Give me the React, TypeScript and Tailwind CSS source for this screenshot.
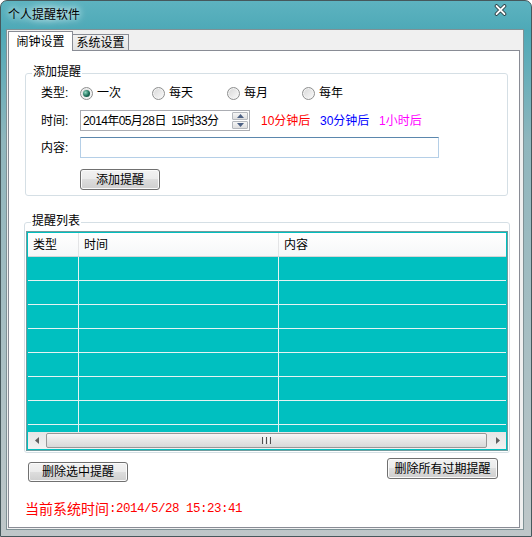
import React from "react";

const FONT = "font-['Liberation_Sans','Noto_Sans_CJK_SC',sans-serif]";

const Radio = ({ checked }: { checked?: boolean }) => (
  <span className="flex h-[13px] w-[13px] shrink-0 items-center justify-center rounded-full border border-[#8e8f8f] bg-[linear-gradient(135deg,#d6d6d6,#fbfbfb)] shadow-[inset_0_0_0_1px_#f4f4f4]">
    {checked && (
      <span className="h-[7px] w-[7px] rounded-full bg-[radial-gradient(circle_at_35%_35%,#8fd8c0,#1d6e59_55%,#0c4536)]" />
    )}
  </span>
);

const Btn = ({ label, className }: { label: string; className: string }) => (
  <button
    className={
      "flex items-center justify-center rounded-[3px] border border-[#707070] bg-[linear-gradient(#f2f2f2_0%,#ebebeb_49%,#dddddd_50%,#cfcfcf_100%)] text-[12px] leading-none text-black shadow-[inset_0_0_0_1px_#fbfbfb] " +
      className
    }
  >
    {label}
  </button>
);

const Tri = ({ dir }: { dir: "up" | "down" | "left" | "right" }) => {
  const d = {
    up: "M0 4 L3.5 0 L7 4 Z",
    down: "M0 0 L7 0 L3.5 4 Z",
    left: "M4 0 L4 7 L0 3.5 Z",
    right: "M0 0 L4 3.5 L0 7 Z",
  }[dir];
  const vertical = dir === "up" || dir === "down";
  return (
    <svg width={vertical ? 7 : 4} height={vertical ? 4 : 7} viewBox={vertical ? "0 0 7 4" : "0 0 4 7"}>
      <path d={d} fill={vertical ? "#4d6184" : "#606060"} />
    </svg>
  );
};

const GroupBox = ({
  title,
  className,
  children,
}: {
  title: string;
  className: string;
  children: React.ReactNode;
}) => (
  <div className={"relative rounded-[3px] border border-[#d5dfe5] " + className}>
    <span className="absolute -top-[9px] left-[6px] bg-white px-[1px] text-[12px] leading-[14px] text-black">
      {title}
    </span>
    {children}
  </div>
);

export default function App() {
  const rows = Array.from({ length: 8 });
  return (
    <div
      className={
        "flex h-[537px] w-[532px] flex-col overflow-hidden rounded-t-[7px] border border-[#46585c] bg-[linear-gradient(180deg,#5db3c0_0px,#4ea9b7_29px,#8fb6bd_140px,#bfc7c9_537px)] " +
        FONT
      }
    >
      {/* title bar */}
      <div className="flex h-[28px] shrink-0 items-start">
        <span className="ml-[7px] mt-[7px] text-[12px] leading-[14px] text-black [text-shadow:0_0_6px_#e9f6f8,0_0_10px_#e9f6f8]">
          个人提醒软件
        </span>
        <svg className="ml-auto mr-[24px] mt-[3px]" width="13" height="12" viewBox="0 0 13 12">
          <path d="M2.5 2 L10.5 10 M10.5 2 L2.5 10" stroke="#2b3a3f" strokeWidth="3.6" strokeLinecap="round" />
          <path d="M2.5 2 L10.5 10 M10.5 2 L2.5 10" stroke="#ffffff" strokeWidth="1.8" strokeLinecap="round" />
        </svg>
      </div>

      {/* client area */}
      <div className="mb-[6px] ml-[5px] mr-[7px] flex flex-1 flex-col border border-[#7f9195] bg-[#f0f0f0]">
        {/* tabs */}
        <div className="flex h-[20px] shrink-0 items-end pl-[1px]">
          <div className="relative z-10 -mb-px flex h-[20px] w-[65px] items-center justify-center border border-b-0 border-[#898c95] bg-white text-[12px] leading-none text-black">
            闹钟设置
          </div>
          <div className="flex h-[16px] w-[56px] items-center justify-center border border-b-0 border-l-0 border-[#898c95] bg-[linear-gradient(#f2f2f2,#e3e3e3)] text-[12px] leading-none text-black">
            系统设置
          </div>
        </div>

        {/* tab page */}
        <div className="mb-[1px] ml-[1px] mr-[3px] flex flex-1 flex-col border border-[#898c95] bg-white">
          <GroupBox title="添加提醒" className="ml-[16px] mt-[22px] h-[123px] w-[483px]">
            <div className="flex flex-col pt-[9px] text-[12px] leading-none text-black">
              {/* 类型 */}
              <div className="flex h-[20px] items-center pl-[15px]">
                <span className="w-[39px]">类型:</span>
                <div className="flex w-[72px] items-center gap-[4px]">
                  <Radio checked />
                  <span>一次</span>
                </div>
                <div className="flex w-[75px] items-center gap-[4px]">
                  <Radio />
                  <span>每天</span>
                </div>
                <div className="flex w-[75px] items-center gap-[4px]">
                  <Radio />
                  <span>每月</span>
                </div>
                <div className="flex items-center gap-[4px]">
                  <Radio />
                  <span>每年</span>
                </div>
              </div>

              {/* 时间 */}
              <div className="mt-[7px] flex h-[21px] items-center pl-[15px]">
                <span className="w-[39px]">时间:</span>
                <div className="flex h-[21px] w-[170px] items-center border border-[#abadb3] pl-[2px]">
                  <span className="tracking-[-0.6px]">2014年05月28日&nbsp;&nbsp;15时33分</span>
                  <div className="ml-auto mr-[1px] flex h-[17px] w-[16px] flex-col gap-[1px]">
                    <div className="flex flex-1 items-center justify-center rounded-[1px] border border-[#b5b8bd] bg-[linear-gradient(#f6f6f6,#dedede)]">
                      <Tri dir="up" />
                    </div>
                    <div className="flex flex-1 items-center justify-center rounded-[1px] border border-[#b5b8bd] bg-[linear-gradient(#f6f6f6,#dedede)]">
                      <Tri dir="down" />
                    </div>
                  </div>
                </div>
                <span className="ml-[11px] w-[59px] text-[#ff0000]">10分钟后</span>
                <span className="w-[59px] text-[#0000ff]">30分钟后</span>
                <span className="text-[#ff00ff]">1小时后</span>
              </div>

              {/* 内容 */}
              <div className="mt-[6px] flex h-[21px] items-center pl-[15px]">
                <span className="w-[39px]">内容:</span>
                <div className="h-[21px] w-[359px] border border-[#b5cfe7] border-t-[#5b87ad]" />
              </div>

              <div className="mt-[11px] pl-[54px]">
                <Btn label="添加提醒" className="h-[21px] w-[80px]" />
              </div>
            </div>
          </GroupBox>

          <GroupBox title="提醒列表" className="ml-[15px] mt-[26px] h-[231px] w-[486px]">
            <div className="mx-[1px] mt-[8px] flex h-[220px] flex-col border border-[#6f9c9e] bg-[#00c0c0] p-[1px]">
              {/* header */}
              <div className="flex h-[24px] shrink-0 border-b border-[#d5d5d5] bg-[linear-gradient(#ffffff,#f6f7f8)] text-[12px] leading-none text-black">
                <div className="flex w-[51px] items-center border-r border-[#e3e4e6] pl-[5px]">类型</div>
                <div className="flex w-[200px] items-center border-r border-[#e3e4e6] pl-[5px]">时间</div>
                <div className="flex flex-1 items-center pl-[5px]">内容</div>
              </div>
              {/* rows */}
              <div className="flex-1 overflow-hidden">
                {rows.map((_, i) => (
                  <div key={i} className="flex h-[24px] border-b border-[#e6f3f3]">
                    <div className="w-[51px] border-r border-[#e6f3f3]" />
                    <div className="w-[200px] border-r border-[#e6f3f3]" />
                    <div className="flex-1" />
                  </div>
                ))}
              </div>
              {/* horizontal scrollbar */}
              <div className="flex h-[17px] shrink-0 items-center bg-[linear-gradient(#e6e6e6,#f2f2f2)]">
                <div className="flex h-[17px] w-[17px] items-center justify-center">
                  <Tri dir="left" />
                </div>
                <div className="ml-[1px] flex h-[15px] w-[441px] items-center justify-center rounded-[2px] border border-[#979797] bg-[linear-gradient(#f7f7f7,#e6e6e6_50%,#d8d8d8)]">
                  <div className="flex gap-[1px]">
                    <span className="h-[7px] w-[1px] bg-[#4f4f4f]" />
                    <span className="h-[7px] w-[1px] bg-[#f7f7f7]" />
                    <span className="h-[7px] w-[1px] bg-[#4f4f4f]" />
                    <span className="h-[7px] w-[1px] bg-[#f7f7f7]" />
                    <span className="h-[7px] w-[1px] bg-[#4f4f4f]" />
                  </div>
                </div>
                <div className="ml-auto flex h-[17px] w-[17px] items-center justify-center">
                  <Tri dir="right" />
                </div>
              </div>
            </div>
          </GroupBox>

          {/* bottom buttons */}
          <div className="mt-[5px] flex items-start">
            <Btn label="删除选中提醒" className="ml-[19px] mt-[4px] h-[20px] w-[100px]" />
            <Btn label="删除所有过期提醒" className="ml-auto mr-[21px] h-[21px] w-[111px]" />
          </div>

          {/* system time */}
          <div className="ml-[16px] mt-[19px] flex items-center text-[#ff0000]">
            <span className="text-[14px] leading-[16px]">当前系统时间</span>
            <span className="font-['Liberation_Mono',monospace] text-[12.5px] leading-[16px] tracking-[-0.5px]">
              :2014/5/28 15:23:41
            </span>
          </div>
        </div>
      </div>
    </div>
  );
}
